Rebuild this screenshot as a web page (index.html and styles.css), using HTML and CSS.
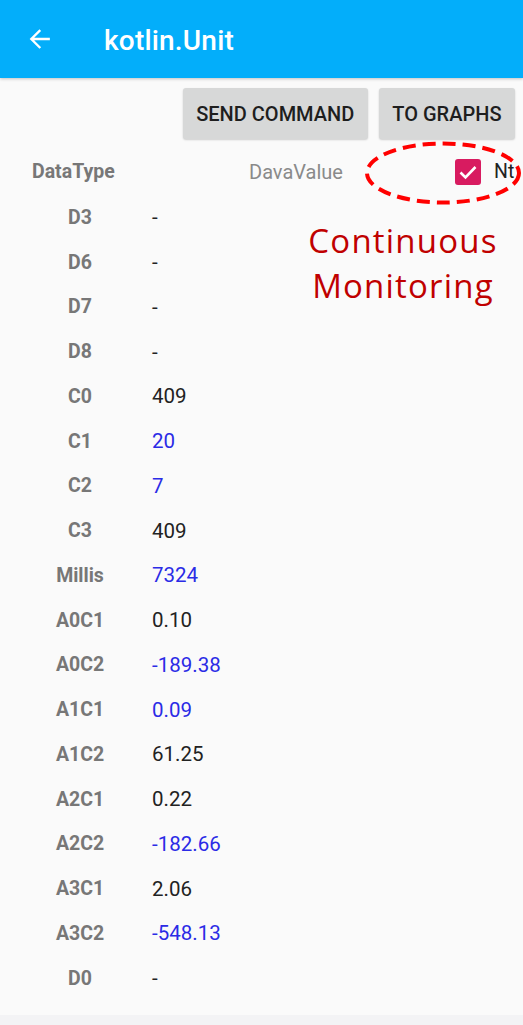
FILE: index.html
```html
<!DOCTYPE html>
<html lang="en">
<head>
<meta charset="utf-8">
<title>kotlin.Unit</title>
<link rel="stylesheet" href="styles.css">
</head>
<body>
<div class="screen">
  <header class="appbar">
    <svg class="back" width="26" height="26" viewBox="0 0 24 24" aria-hidden="true">
      <path d="M20 12H4.5M11.5 4.5L4 12l7.5 7.5" fill="none" stroke="#fff" stroke-width="2.2" stroke-linecap="square"/>
    </svg>
    <h1 class="title">kotlin.Unit</h1>
  </header>

  <div class="actions">
    <button class="btn">SEND COMMAND</button>
    <button class="btn">TO GRAPHS</button>
  </div>

  <div class="table-head">
    <span class="th-type">DataType</span>
    <span class="th-value">DavaValue</span>
    <span class="check">
      <svg width="26" height="26" viewBox="0 0 26 26" aria-hidden="true">
        <rect x="0" y="0" width="26" height="26" rx="3" fill="#d81b60"/>
        <path d="M5.5 13.5l5 5 10-10.5" fill="none" stroke="#fff" stroke-width="2.6"/>
      </svg>
    </span>
    <span class="th-nt">Nt</span>

    <svg class="ring" width="160" height="66" viewBox="0 0 160 66" aria-hidden="true">
      <ellipse cx="79" cy="33" rx="76" ry="29.5" fill="none" stroke="#ff0000" stroke-width="4" stroke-dasharray="13 7"/>
    </svg>
    <div class="note">Continuous<br>Monitoring</div>
  </div>

  <div class="rows">
    <div class="row"><span class="k">D3</span><span class="v">-</span></div>
    <div class="row"><span class="k">D6</span><span class="v">-</span></div>
    <div class="row"><span class="k">D7</span><span class="v">-</span></div>
    <div class="row"><span class="k">D8</span><span class="v">-</span></div>
    <div class="row"><span class="k">C0</span><span class="v">409</span></div>
    <div class="row"><span class="k">C1</span><span class="v blue">20</span></div>
    <div class="row"><span class="k">C2</span><span class="v blue">7</span></div>
    <div class="row"><span class="k">C3</span><span class="v">409</span></div>
    <div class="row"><span class="k">Millis</span><span class="v blue">7324</span></div>
    <div class="row"><span class="k">A0C1</span><span class="v">0.10</span></div>
    <div class="row"><span class="k">A0C2</span><span class="v blue">-189.38</span></div>
    <div class="row"><span class="k">A1C1</span><span class="v blue">0.09</span></div>
    <div class="row"><span class="k">A1C2</span><span class="v">61.25</span></div>
    <div class="row"><span class="k">A2C1</span><span class="v">0.22</span></div>
    <div class="row"><span class="k">A2C2</span><span class="v blue">-182.66</span></div>
    <div class="row"><span class="k">A3C1</span><span class="v">2.06</span></div>
    <div class="row"><span class="k">A3C2</span><span class="v blue">-548.13</span></div>
    <div class="row"><span class="k">D0</span><span class="v">-</span></div>
  </div>

  <div class="bottom-band"></div>
</div>
</body>
</html>
```

FILE: styles.css
```css
* { box-sizing: border-box; }

html, body {
  margin: 0;
  padding: 0;
  background: #fafafa;
  font-family: Roboto, "Liberation Sans", sans-serif;
}

.screen {
  width: 523px;
  height: 1025px;
  display: flex;
  flex-direction: column;
  overflow: hidden;
}

.appbar {
  height: 78px;
  flex: none;
  background: #03aefa;
  display: flex;
  align-items: center;
  padding-left: 27px;
  box-shadow: 0 1px 3px rgba(0, 0, 0, 0.22);
  position: relative;
  z-index: 1;
}

.back { display: block; flex: none; }

.title {
  margin: 2px 0 0 51px;
  color: #fff;
  font-size: 28px;
  font-weight: 500;
  letter-spacing: 0.2px;
}

.actions {
  display: flex;
  justify-content: flex-end;
  gap: 11px;
  padding: 10px 8px 0 0;
}

.btn {
  height: 51px;
  border: none;
  border-radius: 3px;
  background: #d7d8d8;
  color: #1e1e1e;
  font-family: Roboto, "Liberation Sans", sans-serif;
  font-size: 20px;
  font-weight: 500;
  padding: 0 13.5px;
  box-shadow: 0 1px 2px rgba(0, 0, 0, 0.18);
}

.table-head {
  position: relative;
  height: 44.8px;
  margin-top: 10.6px;
  display: flex;
  align-items: center;
}

.th-type {
  margin-left: 32px;
  width: 217px;
  font-size: 19.5px;
  font-weight: 700;
  color: #777;
}

.th-value {
  color: #8a8a8a;
  font-size: 20px;
  width: 206px;
}

.check { display: block; height: 26px; }
.check svg { display: block; }

.th-nt {
  margin-left: 13px;
  color: #222;
  font-size: 19.5px;
  font-weight: 400;
  white-space: nowrap;
}

.ring {
  position: absolute;
  left: 364px;
  top: -10px;
}

.note {
  position: absolute;
  left: 303px;
  top: 68px;
  width: 200px;
  text-align: center;
  color: #c00000;
  font-family: "Open Sans", sans-serif;
  font-size: 33px;
  line-height: 45px;
  letter-spacing: 1.2px;
}

.rows {
  display: flex;
  flex-direction: column;
  padding-top: 0.5px;
}

.row {
  height: 44.76px;
  display: grid;
  grid-template-columns: 96px 1fr;
  column-gap: 24px;
  padding-left: 32px;
  align-items: center;
}

.k {
  text-align: center;
  font-size: 19.5px;
  font-weight: 700;
  color: #777;
}

.v { color: #222; font-size: 20.5px; }
.v.blue { color: #2b2be6; }

.bottom-band {
  margin-top: auto;
  height: 10px;
  background: #f3f3f5;
}
```
